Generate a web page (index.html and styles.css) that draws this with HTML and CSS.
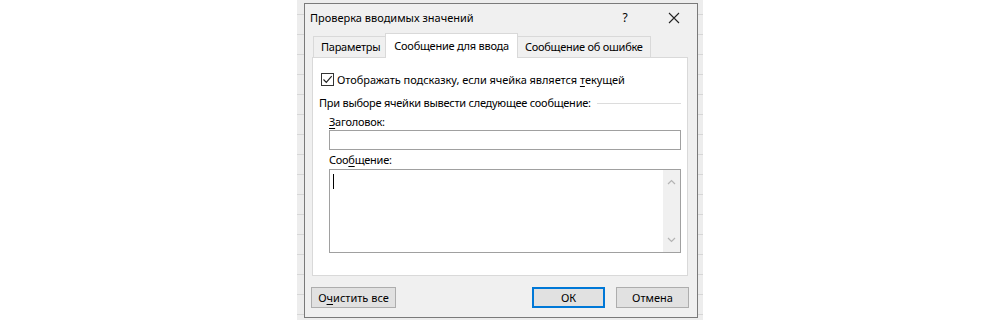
FILE: index.html
```html
<!DOCTYPE html>
<html lang="ru">
<head>
    <meta charset="UTF-8">
    <title>Проверка вводимых значений</title>
    <link rel="stylesheet" href="styles.css">
</head>
<body>
    <div class="sheet">
        <div class="dialog">
            <div class="titlebar">
                <span class="title">Проверка вводимых значений</span>
                <span class="help">?</span>
                <span class="close">
                    <svg width="12" height="12" viewBox="0 0 12 12"><path d="M1 1 L11 11 M11 1 L1 11" stroke="#222" stroke-width="1.1" fill="none"/></svg>
                </span>
            </div>
            <div class="tabs">
                <div class="tab">Параметры</div>
                <div class="tab active">Сообщение для ввода</div>
                <div class="tab">Сообщение об ошибке</div>
            </div>
            <div class="panel">
                <div class="check-row">
                    <span class="checkbox">
                        <svg width="11" height="11" viewBox="0 0 11 11"><path d="M1.5 5.5 L4.3 8.3 L9.7 2.2" stroke="#222" stroke-width="1.2" fill="none"/></svg>
                    </span>
                    <span>Отображать подсказку, если ячейка является <u>т</u>екущей</span>
                </div>
                <div class="group-head">
                    <span>При выборе ячейки вывести следующее сообщение:</span>
                    <span class="rule"></span>
                </div>
                <div class="fields">
                    <div class="field-label"><u>З</u>аголовок:</div>
                    <div class="input"></div>
                    <div class="field-label">Соо<u>б</u>щение:</div>
                    <div class="textarea">
                        <div class="text-body"><span class="caret"></span></div>
                        <div class="scrollbar">
                            <svg width="9" height="6" viewBox="0 0 9 6"><path d="M1 5 L4.5 1.5 L8 5" stroke="#b4b4b4" stroke-width="1.2" fill="none"/></svg>
                            <svg width="9" height="6" viewBox="0 0 9 6"><path d="M1 1 L4.5 4.5 L8 1" stroke="#b4b4b4" stroke-width="1.2" fill="none"/></svg>
                        </div>
                    </div>
                </div>
            </div>
            <div class="buttons">
                <button class="btn btn-clear">О<u>ч</u>истить все</button>
                <span class="spacer"></span>
                <button class="btn btn-ok">ОК</button>
                <button class="btn">Отмена</button>
            </div>
        </div>
    </div>
</body>
</html>
```

FILE: styles.css
```css
body {
    margin: 0;
    background-color: #fff;
    font-family: 'Noto Sans', sans-serif;
    font-size: 11px;
    color: #000;
}
u {
    text-decoration-thickness: 1px;
    text-underline-offset: 2px;
}
.sheet {
    box-sizing: border-box;
    margin-left: 297px;
    width: 406px;
    height: 320px;
    padding: 3px 4px 0 7px;
    background: repeating-linear-gradient(to bottom, #ededed 0, #ededed 14px, #d6d6d6 14px, #d6d6d6 15px, #ededed 15px, #ededed 20px);
}
.dialog {
    box-sizing: border-box;
    width: 394px;
    height: 315px;
    border: 1px solid #7a7a7a;
    background-color: #f0f0f0;
    padding: 0 9px 0 7px;
    display: flex;
    flex-direction: column;
}
.titlebar {
    height: 27px;
    display: flex;
    align-items: center;
    margin: 0 -9px 0 -7px;
    padding-left: 5px;
}
.title {
    font-size: 11px;
}
.help {
    margin-left: auto;
    width: 30px;
    text-align: center;
    font-size: 12px;
    margin-right: 11px;
}
.close {
    width: 46px;
    display: flex;
    justify-content: center;
}
.tabs {
    height: 26px;
    display: flex;
    align-items: flex-end;
    padding-left: 1px;
    letter-spacing: -0.25px;
}
.tab {
    box-sizing: border-box;
    height: 21px;
    line-height: 19px;
    padding: 0 7px;
    white-space: nowrap;
    border: 1px solid #d9d9d9;
    border-bottom: none;
    background-color: #f0f0f0;
    margin-right: -1px;
}
.tab.active {
    position: relative;
    z-index: 1;
    height: 25px;
    line-height: 23px;
    margin: 0 -1px -1px -2px;
    padding: 0 8px;
    background-color: #fff;
}
.panel {
    box-sizing: border-box;
    height: 219px;
    border: 1px solid #d9d9d9;
    background-color: #fff;
    padding: 13px 6px 0 8px;
    letter-spacing: -0.25px;
}
.check-row {
    height: 16px;
    display: flex;
    align-items: center;
    gap: 3px;
    letter-spacing: -0.05px;
}
.checkbox {
    box-sizing: border-box;
    width: 13px;
    height: 13px;
    border: 1px solid #333;
    display: flex;
    align-items: center;
    justify-content: center;
}
.group-head {
    height: 16px;
    margin-top: 7px;
    margin-left: -2px;
    display: flex;
    align-items: center;
    gap: 6px;
}
.rule {
    flex: 1;
    height: 1px;
    background-color: #dcdcdc;
    margin-top: 2px;
}
.fields {
    padding-left: 8px;
}
.field-label {
    height: 16px;
    line-height: 16px;
    margin-top: 4px;
}
.input {
    box-sizing: border-box;
    height: 20px;
    border: 1px solid #a0a0a0;
    background-color: #fff;
}
.input + .field-label {
    margin-top: 2px;
}
.textarea {
    box-sizing: border-box;
    margin-top: 1px;
    height: 84px;
    border: 1px solid #a0a0a0;
    display: flex;
}
.text-body {
    flex: 1;
    padding: 4px 0 0 3px;
}
.caret {
    display: block;
    width: 1px;
    height: 15px;
    background-color: #000;
}
.scrollbar {
    width: 17px;
    background-color: #f0f0f0;
    display: flex;
    flex-direction: column;
    align-items: center;
    justify-content: space-between;
    padding: 9px 0 9px;
}
.buttons {
    margin-top: 11px;
    margin-left: -1px;
    margin-right: -1px;
    display: flex;
    gap: 11px;
}
.spacer {
    flex: 1;
}
.btn {
    box-sizing: border-box;
    height: 21px;
    width: 73px;
    padding: 0;
    border: 1px solid #adadad;
    background-color: #e1e1e1;
    font-family: 'Noto Sans', sans-serif;
    font-size: 11px;
    color: #000;
}
.btn-clear {
    width: 85px;
}
.btn-ok {
    border: 2px solid #0078d7;
}
```
